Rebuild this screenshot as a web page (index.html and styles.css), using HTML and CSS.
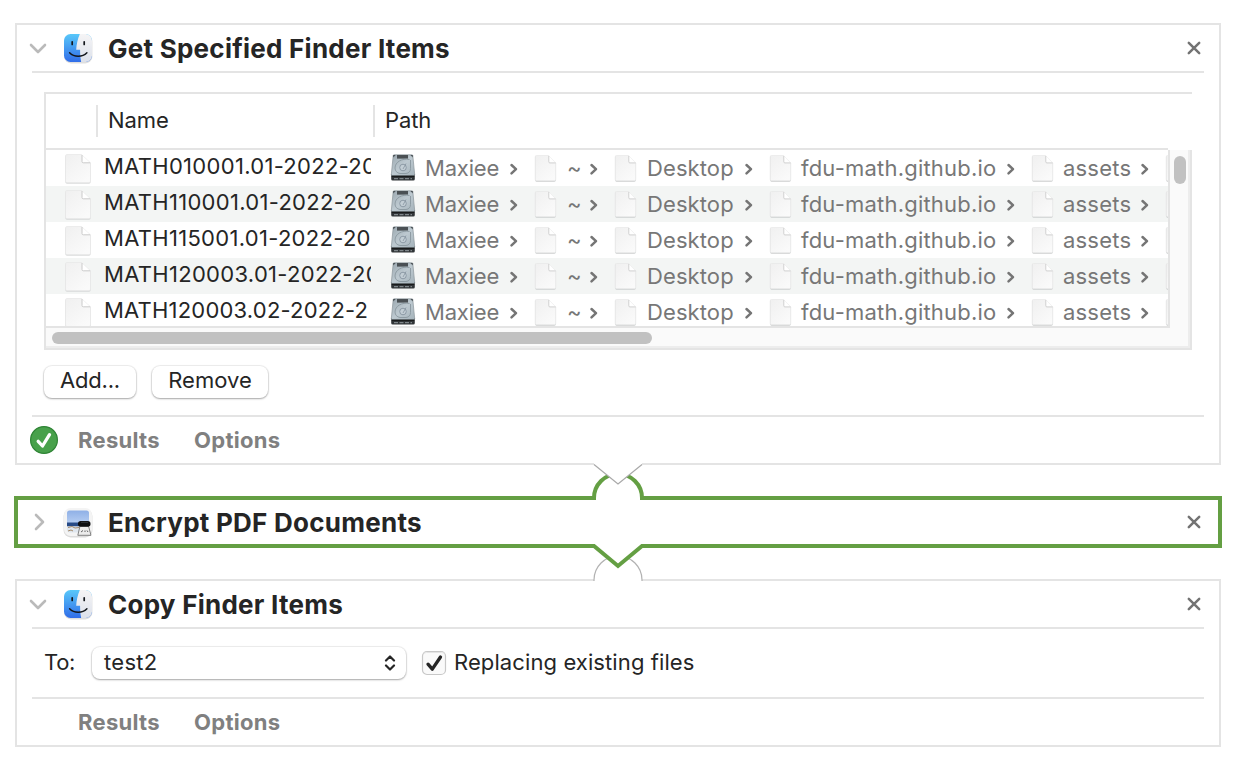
FILE: index.html
```
<!DOCTYPE html>
<html lang="en">
<head>
<meta charset="utf-8">
<title>Workflow</title>
<link rel="stylesheet" href="styles.css">
</head>
<body>
<svg class="defs" aria-hidden="true">
  <defs>
    <linearGradient id="blue" x1="0" y1="0" x2="0" y2="1"><stop offset="0" stop-color="#5acbfa"/><stop offset="1" stop-color="#2f6ae8"/></linearGradient>
    <linearGradient id="pale" x1="0" y1="0" x2="0" y2="1"><stop offset="0" stop-color="#f6f5f6"/><stop offset="1" stop-color="#dbe0ea"/></linearGradient>
    <linearGradient id="paper" x1="0" y1="0" x2="0.7" y2="1"><stop offset="0" stop-color="#f0f0f0"/><stop offset="1" stop-color="#fafafa"/></linearGradient>
    <linearGradient id="metal" x1="0" y1="0" x2="1" y2="1"><stop offset="0" stop-color="#9aa7af"/><stop offset="0.5" stop-color="#bdc9d0"/><stop offset="1" stop-color="#a5b3bb"/></linearGradient>
    <linearGradient id="sky" x1="0" y1="0" x2="0" y2="1"><stop offset="0" stop-color="#8fb0e6"/><stop offset="1" stop-color="#b5cdf2"/></linearGradient>
    <clipPath id="tile"><rect x="1" y="1" width="28" height="28" rx="6.5"/></clipPath>
  </defs>
  <symbol id="finder" viewBox="0 0 30 32">
    <rect x="1" y="2.2" width="28.4" height="28.2" rx="7" fill="#000" opacity=".13"/>
    <g clip-path="url(#tile)">
      <rect width="30" height="30" fill="url(#blue)"/>
      <path d="M17.300 0C14.800 5 13.500 11 13.200 16.800h3.900c-.1 4.500.3 9 1.500 14.200H30V0z" fill="url(#pale)"/>
    </g>
    <path d="M9.200 8.800v2.600M21.200 8.800v2.600" stroke="#14171c" stroke-width="1.700" stroke-linecap="round"/>
    <path d="M6.600 19.800c4.500 4.700 12.800 4.700 17.300 0" fill="none" stroke="#14171c" stroke-width="1.500" stroke-linecap="round"/>
  </symbol>
  <symbol id="preview" viewBox="0 0 30 32">
    <rect x=".6" y="2" width="28.800" height="28.400" rx="7" fill="#000" opacity=".14"/>
    <rect x="1" y="1" width="28" height="28" rx="6.500" fill="#f4f4f4"/>
    <path d="M4 6q0-2.500 2.500-2.500h17Q26 3.500 26 6v10H4z" fill="url(#sky)"/>
    <path d="M4 15.500h22v4H4z" fill="#274a86"/>
    <path d="M4 19.500h22v3q0 3-3 3H7q-3 0-3-3z" fill="#dfe6ee"/>
    <path d="M5 20.500l4-1 3 1.500 4-.5M5 24l3-1 2 1" stroke="#a58b6c" fill="none"/>
    <path d="M17 19h8.500l2.500 9.300H14.800z" fill="#ececec" stroke="#666" stroke-width=".8"/>
    <path d="M18 25l2-1.500M22 25v-1.500M25 25l-1-1.500" stroke="#555" stroke-width=".9"/>
    <rect x="15" y="14" width="12.500" height="5.800" rx="2.800" fill="#0d0e10"/>
    <path d="M18 15.300h7" stroke="#42464c" stroke-width=".7"/>
  </symbol>
  <symbol id="doc" viewBox="0 0 28 30" preserveAspectRatio="none">
    <path d="M1.500 2.800q0-1.500 1.500-1.500h14.500l9 8.500V28q0 1.600-1.500 1.600H3Q1.500 29.600 1.500 28z" fill="#c9cccc"/>
    <path d="M1.500 2q0-1.500 1.500-1.500h14.500l9 8.500v18q0 1.700-1.500 1.700H3q-1.500 0-1.500-1.700z" fill="url(#paper)" stroke="#e6e6e6" stroke-width=".7"/>
    <path d="M18 1.200v6.300q0 1.300 1.300 1.300H26z" fill="#fff"/>
    <path d="M18 1v6.500q0 1.300 1.300 1.300H26.300" fill="none" stroke="#cacaca" stroke-width="1"/>
  </symbol>
  <symbol id="disk" viewBox="0 0 26 28">
    <path d="M1.200 20h23.600v5q0 1.500-1.500 1.500H2.700q-1.500 0-1.500-1.500z" fill="#303437"/>
    <path d="M3.200 1.500q.1-.7.900-.7h17.800q.8 0 .9.700l1.900 19.200q0 .8-.8.800H2.100q-.8 0-.8-.8z" fill="url(#metal)" stroke="#8b959b" stroke-width=".7"/>
    <path d="M3.200 3.500V1h2.500zM22.800 3.500V1h-2.500z" fill="#4a5155"/>
    <rect x="7" y="1" width="11" height="3.600" fill="#4a5054"/>
    <path d="M19.500 5.500C12 4 5 8 5 14c0 3 2 5 5 5.500h6c3-.3 4.500-2 4.500-5V6" fill="none" stroke="#8a979f" stroke-width=".9"/>
    <circle cx="13" cy="13.500" r="3.300" fill="#c3ced5" stroke="#8794a0" stroke-width=".9"/>
    <path d="M13 15l3-5.500" stroke="#8794a0" stroke-width=".8"/>
    <path d="M1.800 22.300h22.400" stroke="#17191a" stroke-width="1.200"/>
    <path d="M4 24.700h18" stroke="#7f868a" stroke-width="1.300" stroke-dasharray="4 1.500"/>
  </symbol>
  <symbol id="next" viewBox="0 0 10 14"><path d="M2.500 3l4.500 4.200-4.500 4.200" fill="none" stroke="#757575" stroke-width="2.500" stroke-linecap="round" stroke-linejoin="round"/></symbol>
  <symbol id="down" viewBox="0 0 18 12"><path d="M2 2l7 7 7-7" fill="none" stroke="#bababa" stroke-width="2.600" stroke-linecap="round" stroke-linejoin="round"/></symbol>
  <symbol id="close" viewBox="0 0 14 14"><path d="M1.800 1.800l10.400 10.400M12.200 1.800L1.800 12.200" fill="none" stroke="#737373" stroke-width="2.500" stroke-linecap="round"/></symbol>
</svg>

<main class="workflow">
  <section class="action">
    <header class="action-head">
      <svg class="chevron"><use href="#down"/></svg>
      <svg class="app-icon"><use href="#finder"/></svg>
      <h2 class="title">Get Specified Finder Items</h2>
      <svg class="close"><use href="#close"/></svg>
    </header>
    <div class="table">
      <div class="columns"><span class="col-icon"></span><span class="col-name">Name</span><span class="col-path">Path</span></div>
      <div class="table-body">
        <div class="rows">
          <div class="row"><svg class="file"><use href="#doc"/></svg><span class="name">MATH010001.01-2022-20</span>
            <svg class="disk"><use href="#disk"/></svg><span class="crumb c1">Maxiee</span><svg class="next"><use href="#next"/></svg><svg class="folder"><use href="#doc"/></svg><span class="crumb c2">~</span><svg class="next"><use href="#next"/></svg><svg class="folder"><use href="#doc"/></svg><span class="crumb c3">Desktop</span><svg class="next"><use href="#next"/></svg><svg class="folder"><use href="#doc"/></svg><span class="crumb c4">fdu-math.github.io</span><svg class="next"><use href="#next"/></svg><svg class="folder"><use href="#doc"/></svg><span class="crumb c5">assets</span><svg class="next"><use href="#next"/></svg><svg class="folder"><use href="#doc"/></svg></div>
          <div class="row"><svg class="file"><use href="#doc"/></svg><span class="name">MATH110001.01-2022-20</span>
            <svg class="disk"><use href="#disk"/></svg><span class="crumb c1">Maxiee</span><svg class="next"><use href="#next"/></svg><svg class="folder"><use href="#doc"/></svg><span class="crumb c2">~</span><svg class="next"><use href="#next"/></svg><svg class="folder"><use href="#doc"/></svg><span class="crumb c3">Desktop</span><svg class="next"><use href="#next"/></svg><svg class="folder"><use href="#doc"/></svg><span class="crumb c4">fdu-math.github.io</span><svg class="next"><use href="#next"/></svg><svg class="folder"><use href="#doc"/></svg><span class="crumb c5">assets</span><svg class="next"><use href="#next"/></svg><svg class="folder"><use href="#doc"/></svg></div>
          <div class="row"><svg class="file"><use href="#doc"/></svg><span class="name">MATH115001.01-2022-20</span>
            <svg class="disk"><use href="#disk"/></svg><span class="crumb c1">Maxiee</span><svg class="next"><use href="#next"/></svg><svg class="folder"><use href="#doc"/></svg><span class="crumb c2">~</span><svg class="next"><use href="#next"/></svg><svg class="folder"><use href="#doc"/></svg><span class="crumb c3">Desktop</span><svg class="next"><use href="#next"/></svg><svg class="folder"><use href="#doc"/></svg><span class="crumb c4">fdu-math.github.io</span><svg class="next"><use href="#next"/></svg><svg class="folder"><use href="#doc"/></svg><span class="crumb c5">assets</span><svg class="next"><use href="#next"/></svg><svg class="folder"><use href="#doc"/></svg></div>
          <div class="row"><svg class="file"><use href="#doc"/></svg><span class="name">MATH120003.01-2022-20</span>
            <svg class="disk"><use href="#disk"/></svg><span class="crumb c1">Maxiee</span><svg class="next"><use href="#next"/></svg><svg class="folder"><use href="#doc"/></svg><span class="crumb c2">~</span><svg class="next"><use href="#next"/></svg><svg class="folder"><use href="#doc"/></svg><span class="crumb c3">Desktop</span><svg class="next"><use href="#next"/></svg><svg class="folder"><use href="#doc"/></svg><span class="crumb c4">fdu-math.github.io</span><svg class="next"><use href="#next"/></svg><svg class="folder"><use href="#doc"/></svg><span class="crumb c5">assets</span><svg class="next"><use href="#next"/></svg><svg class="folder"><use href="#doc"/></svg></div>
          <div class="row"><svg class="file"><use href="#doc"/></svg><span class="name name-short">MATH120003.02-2022-2</span>
            <svg class="disk"><use href="#disk"/></svg><span class="crumb c1">Maxiee</span><svg class="next"><use href="#next"/></svg><svg class="folder"><use href="#doc"/></svg><span class="crumb c2">~</span><svg class="next"><use href="#next"/></svg><svg class="folder"><use href="#doc"/></svg><span class="crumb c3">Desktop</span><svg class="next"><use href="#next"/></svg><svg class="folder"><use href="#doc"/></svg><span class="crumb c4">fdu-math.github.io</span><svg class="next"><use href="#next"/></svg><svg class="folder"><use href="#doc"/></svg><span class="crumb c5">assets</span><svg class="next"><use href="#next"/></svg><svg class="folder"><use href="#doc"/></svg></div>
        </div>
        <div class="vscroll"><div class="vthumb"></div></div>
        <div class="hscroll"><div class="hthumb"></div></div>
      </div>
    </div>
    <div class="buttons"><button class="button add">Add...</button><button class="button remove">Remove</button></div>
    <footer class="action-foot">
      <svg class="status" viewBox="0 0 28 28"><circle cx="14" cy="14" r="13.400" fill="#48a14b" stroke="#2f8435" stroke-width="1.200"/><path d="M8.200 15.300l4.300 4.700 7-11.300" fill="none" stroke="#fff" stroke-width="3.300" stroke-linecap="round" stroke-linejoin="round"/></svg>
      <span class="tab tab-results">Results</span><span class="tab">Options</span>
    </footer>
    <svg class="link-out" viewBox="0 0 52 24"><path d="M2 0v1.500L26 21 50 1.500V0z" fill="#fff"/><path d="M2 1.500L26 21 50 1.500" fill="none" stroke="#a9a9a9" stroke-width="1.200"/></svg>
  </section>

  <section class="action selected">
    <svg class="link-in" viewBox="0 0 54 32"><path d="M3 32v-5a24 24 0 0 1 48 0v5z" fill="#fff"/><path d="M3 29v-2a24 24 0 0 1 48 0v2" fill="none" stroke="#649f43" stroke-width="4"/></svg>
    <header class="action-head">
      <svg class="chevron closed"><use href="#down"/></svg>
      <svg class="app-icon"><use href="#preview"/></svg>
      <h2 class="title">Encrypt PDF Documents</h2>
      <svg class="close"><use href="#close"/></svg>
    </header>
    <svg class="link-out" viewBox="0 0 52 26"><path d="M1 0v2L26 22 51 2V0z" fill="#fff"/><path d="M0 2h2l24 20L50 2h2" fill="none" stroke="#649f43" stroke-width="4"/></svg>
  </section>

  <section class="action">
    <svg class="link-in" viewBox="0 0 54 28"><path d="M3 28v-3a24 24 0 0 1 48 0v3z" fill="#fff"/><path d="M3 26v-1a24 24 0 0 1 48 0v1" fill="none" stroke="#b2b2b2" stroke-width="1.200"/></svg>
    <header class="action-head">
      <svg class="chevron"><use href="#down"/></svg>
      <svg class="app-icon"><use href="#finder"/></svg>
      <h2 class="title">Copy Finder Items</h2>
      <svg class="close"><use href="#close"/></svg>
    </header>
    <div class="settings">
      <span class="to">To:</span>
      <div class="select"><span class="value">test2</span><svg class="stepper" viewBox="0 0 12 16"><path d="M2 5.500l4-4 4 4M2 10.500l4 4 4-4" fill="none" stroke="#252525" stroke-width="2.200" stroke-linecap="round" stroke-linejoin="round"/></svg></div>
      <svg class="checkbox" viewBox="0 0 26 26"><rect x="1.500" y="1.500" width="23" height="23" rx="4.500" fill="#fafafa" stroke="#c8c8c8" stroke-width="1.200"/><path d="M2.500 4q1-1.500 3-1.500h15q2 0 3 1.500" fill="none" stroke="#e4e4e4"/><path d="M7 14.200l4.300 5L19.500 7" fill="none" stroke="#252525" stroke-width="3.300" stroke-linecap="round" stroke-linejoin="round"/></svg>
      <span class="replace">Replacing existing files</span>
    </div>
    <footer class="action-foot">
      <span class="status"></span>
      <span class="tab tab-results">Results</span><span class="tab">Options</span>
    </footer>
  </section>
</main>
</body>
</html>
```
FILE: styles.css
```
* { box-sizing: border-box; }
body { margin: 0; background: #fff; color: #252525; font: 22px/26px Inter, "Liberation Sans", sans-serif; letter-spacing: .1px; }
svg { display: block; flex: none; }
.defs { position: absolute; width: 0; height: 0; }

.workflow { display: flex; flex-direction: column; padding: 23px 14px 0; height: 770px; overflow: hidden; }
.action { position: relative; margin: 0 1px; border: 2px solid #e4e4e4; background: #fff; }
.action.selected { margin: 31px 0; height: 52px; border: 4px solid #649f43; z-index: 1; }

.action-head { display: flex; align-items: center; height: 48px; margin: 0 15px; border-bottom: 2px solid #e4e4e4; }
.selected .action-head { height: 44px; margin: 0 14px; border: 0; }
.chevron { width: 18px; height: 12px; margin: 2px 0 0 -3px; }
.chevron.closed { transform: rotate(-90deg); margin: 0 -2px 0 -1px; }
.app-icon { width: 30px; height: 32px; margin: 2px 15px 0 16px; }
.title { margin: 0; padding-top: 2px; flex: 1; font-size: 26px; line-height: 32px; font-weight: 700; letter-spacing: .25px; }
.close { width: 14px; height: 14px; margin-right: 3px; }

.table { margin: 19px 27px 0; height: 258px; border: 2px solid #e4e4e4; border-right: 0; }
.columns { display: flex; align-items: center; height: 56px; margin-right: 24px; border-bottom: 2px solid #e4e4e4; letter-spacing: -.1px; }
.columns span { height: 32px; line-height: 30px; }
.col-icon { width: 50px; }
.col-name { width: 277px; padding-left: 10px; border-left: 2px solid #e4e4e4; }
.col-path { padding-left: 10px; border-left: 2px solid #e4e4e4; }

.table-body { display: grid; grid-template: 178px 20px / 1124px 22px; }
.rows { overflow: hidden; border-right: 2px solid #e4e4e4; border-bottom: 2px solid #e4e4e4; }
.row { display: flex; height: 36px; white-space: nowrap; }
.row:nth-child(even) { background: #f3f5f4; }
.file { width: 28px; height: 30px; margin: 4px 0 0 18px; }
.name { flex: none; width: 267px; margin-left: 12px; padding-top: 3px; overflow: hidden; letter-spacing: .3px; }
.name-short { letter-spacing: .2px; }
.disk { width: 26px; height: 28px; margin: 4px 0 0 19px; }
.crumb { flex: none; padding-top: 5px; margin-left: 9px; color: #777; }
.next { width: 10px; height: 14px; margin: 12px 0 0; }
.folder { width: 23px; height: 27px; margin: 5px 0 0 15px; }
.c1 { width: 84px; letter-spacing: -.2px; }
.c2 { width: 22px; margin-left: 10px; }
.c3 { width: 97px; margin-left: 10px; }
.c4 { width: 205px; letter-spacing: .2px; }
.c5 { width: 77px; letter-spacing: .2px; }
.vscroll { border-right: 2px solid #e4e4e4; background: linear-gradient(#ededed, #ededed) right / 2px 100% no-repeat #fafafa; padding: 6px 4px; }
.vthumb { width: 12px; height: 28px; border-radius: 6px; background: #c1c1c1; }
.hscroll { grid-column: 1 / 3; height: 20px; padding: 4px 6px; border-right: 2px solid #e4e4e4; background: linear-gradient(#ededed, #ededed) bottom / 100% 2px no-repeat, linear-gradient(#ededed, #ededed) right / 2px 100% no-repeat #fafafa; }
.hthumb { width: 600px; height: 12px; border-radius: 6px; background: #c1c1c1; }

.buttons { display: flex; gap: 16px; padding: 16px 27px; height: 65px; }
.button { height: 32px; padding: 0 0 4px; border: 0; border-radius: 8px; background: #fff; color: inherit; font: inherit; letter-spacing: 0; box-shadow: 0 0 1px 1px rgba(0,0,0,.07), 0 1px 2px rgba(0,0,0,.3); }
.add { width: 92px; letter-spacing: -.2px; }
.remove { width: 116px; }

.action-foot { display: flex; align-items: center; height: 48px; margin: 0 15px; border-top: 2px solid #e4e4e4; font-weight: 700; color: #808080; letter-spacing: .3px; }
.status { width: 28px; height: 28px; margin: 0 20px 0 -2px; }
.tab-results { width: 116px; }

.settings { display: flex; align-items: center; height: 68px; padding: 0 27px 1px; }
.to, .value, .replace { position: relative; top: -.5px; }
.to { width: 48px; letter-spacing: -.3px; }
.select { display: flex; align-items: center; justify-content: space-between; width: 314px; height: 32px; padding: 0 10px 0 12px; border-radius: 8px; box-shadow: 0 0 1px 1px rgba(0,0,0,.07), 0 1px 2px rgba(0,0,0,.3); }
.value { letter-spacing: .3px; }
.stepper { width: 12px; height: 16px; }
.checkbox { width: 26px; height: 26px; margin: 0 7px 0 15px; }

.link-out { position: absolute; z-index: 2; left: 575px; top: 438px; width: 52px; height: 24px; }
.selected .link-out { left: 574px; top: 44px; height: 26px; }
.link-in { position: absolute; left: 574px; top: -26px; width: 54px; height: 28px; }
.selected .link-in { left: 573px; top: -29px; height: 32px; }
.action:first-child { z-index: 3; }
```
